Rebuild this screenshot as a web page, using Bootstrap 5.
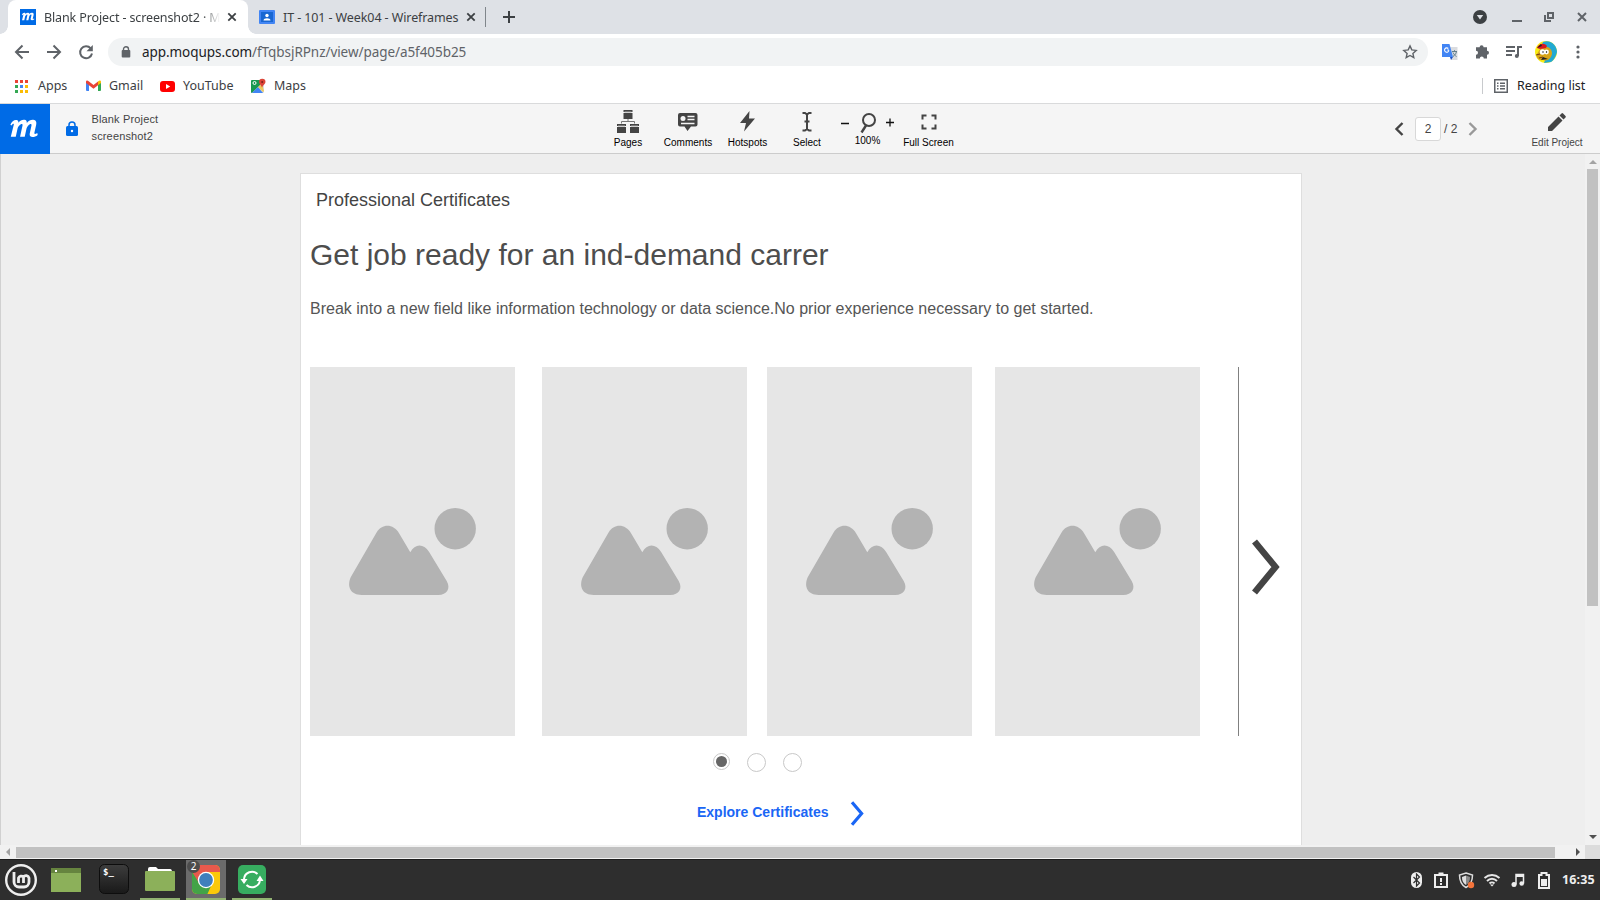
<!DOCTYPE html>
<html lang="en">
<head>
<meta charset="utf-8">
<title>Blank Project - screenshot2 · Moqups</title>
<link href="https://cdn.jsdelivr.net/npm/bootstrap@5.3.0/dist/css/bootstrap.min.css" rel="stylesheet">
<style>
html,body{height:900px;overflow:hidden}
body{width:1600px;font-family:"Liberation Sans",Arial,sans-serif;color:#444}
svg{display:block;overflow:visible;flex:none}
.bar{display:grid;align-items:center;white-space:nowrap}
.ui{font-family:"Noto Sans","Open Sans",sans-serif;font-size:12.5px;color:#3c4043;line-height:18px}
.tabstrip{height:34px;background:#dee1e6;grid-template-columns:8px 240px 11px 24px 181px 14px 9px 14px 972px 39px 32px 33px 23px}
.tab-active{height:34px;background:#fff;border-radius:8px 8px 0 0;padding-left:12px;position:relative}
.tab-active::before,.tab-active::after{content:"";position:absolute;bottom:0;width:8px;height:8px}
.tab-active::before{left:-8px;background:radial-gradient(circle at 0 0,#dee1e6 7.5px,#fff 8px)}
.tab-active::after{right:-8px;background:radial-gradient(circle at 100% 0,#dee1e6 7.5px,#fff 8px)}
.tab-title{width:179px;margin:2px 0 0 8px;overflow:hidden;-webkit-mask-image:linear-gradient(90deg,#000 158px,transparent 176px);letter-spacing:-.12px}
.tab-second{letter-spacing:-.1px;padding-top:2px}
.toolbar{height:35px;grid-template-columns:14px 32px 32px 30px 1320px 14px 30px 34px 28px 39px 27px}
.omni{height:28px;border-radius:14px;background:#f1f3f4;padding:0 11px 0 13px}
.url{font-size:13.5px;color:#5f6368;margin-left:11px;letter-spacing:-.06px}
.url b{font-weight:400;color:#202124}
.bookmarks{height:35px;grid-template-columns:15px 23px 48px 23px 51px 23px 68px 23px 1208px 12px 23px 80px;border-bottom:1px solid #d9dadb}
.apphead{height:50px;background:#f5f5f5;border-bottom:1px solid #ccc;display:grid;grid-template-columns:50px 548px 60px 60px 59px 60px 61px 61px 435px 21px 25px 24px 67px 69px}
.m-logo{background:#006be6;height:50px;width:50px}
.tool{font-size:10px;line-height:12px;color:#000;height:49px;padding-top:5px;text-align:center;white-space:nowrap}
.tool svg{margin:0 auto 4px}
.doc{font-size:11px;line-height:17px;color:#444;letter-spacing:.15px}
.pagebox{width:26px;height:24px;border:1px solid #d8d8d8;border-radius:3px;background:#fff;font-size:12px;line-height:23px;text-align:center}
.work{height:705px;background:#eee;display:grid;grid-template-columns:1585px 15px;grid-template-rows:691px 14px}
.canvas-area{overflow:hidden;border-left:1px solid #d0d0d0;padding:19px 0 0 299px}
.sheet{width:1002px;height:720px;background:#fff;border:1px solid #dedede;padding:16px 0 0 9px}
.t1{font-size:18px;line-height:20px;color:#444;margin:0 0 0 6px}
.t2{font-size:30px;line-height:36px;color:#4d4d4d;margin:27px 0 0}
.t3{font-size:16px;line-height:20px;color:#555;margin:26px 0 0}
.gallery{display:grid;grid-template-columns:232px 225px 228px 243px 15px 30px;margin-top:48px;height:369px;align-items:center}
.ph{width:205px;height:369px;background:#e6e6e6}
.divide{width:1px;height:369px;background:#808080}
.dots{margin:16px 0 0 403px}
.explore{margin:26px 0 0 387px;font-size:14px;font-weight:700;color:#1a66f5;line-height:24px}
.vs,.hs{background:#f1f1f1}
.taskbar{height:41px;background:#2e2e2e;border-top:1px solid #1d1d1d;grid-template-columns:5px 46px 43px 46px 46px 46px 1179px 23px 24px 26px 27px 27px 24px 38px}
.win{width:40px;height:40px;border-bottom:2px solid #92b372;padding:5px 0 0 5px}
.win.on{background:#6b6b6b;position:relative}
.cnt{position:absolute;left:1px;top:0;width:13px;height:13px;border-radius:7px;background:#4c4c4c;color:#fff;font:10px/13px "Noto Sans",sans-serif;text-align:center}
.clock{font:700 12.5px/18px "Noto Sans",sans-serif;color:#eee;letter-spacing:.15px}
</style>
</head>
<body>
<svg width="0" height="0" class="position-absolute"><defs>
<path id="em" d="M1 6.2C2 3.4 4 2.4 5.7 2.8c1 .3 1.200 1.100 1 2C8 3.300 9.600 2.500 11.200 2.700c1.300.1 1.800 1 1.700 2.200C14.300 3.300 16 2.500 17.600 2.700c2 .2 2.500 1.700 2.100 3.500l-1.300 5.600c-.2 1 .5 1.100 2.100.1l.3 1.300c-2.300 2-6.300 2.200-5.800-.8l1.300-5.800c.2-1-.4-1.300-1.200-.9-1 .5-2 1.600-2.400 3l-1.300 5.800H8l1.800-7.800c.2-1-.4-1.300-1.200-.9-1 .5-2 1.600-2.400 3l-1.300 5.700H1.300L3.500 6c.2-1-.9-.8-1.700.7z"/>
<symbol id="pic" viewBox="0 0 205 369"><g fill="#b3b3b3"><path d="M40.700 210.300 66.700 165.300C72 156.500 83.500 156.500 89.200 166.500L100.300 185.300C105 176.500 113.500 176.500 119 184.700L136.700 214C141 221.500 137 228 128.300 228H51.700C41 228 36.500 220 40.700 210.300Z"/><circle cx="145.200" cy="161.700" r="20.700"/></g></symbol>
<symbol id="x" viewBox="0 0 10 10"><path d="M1.300 1.300l7.400 7.400M8.700 1.300L1.300 8.700" stroke="#3c4043" stroke-width="1.800"/></symbol>
</defs></svg>

<header class="bar tabstrip ui">
  <span></span>
  <div class="tab-active d-flex align-items-center">
    <svg width="16" height="16"><rect width="16" height="16" fill="#006be6"/><use href="#em" fill="#fff" transform="translate(1.200 2) scale(.63)"/></svg>
    <span class="tab-title">Blank Project - screenshot2 · M</span>
    <svg class="ms-1" width="10" height="10"><use href="#x"/></svg>
  </div>
  <span></span>
  <svg width="16" height="14"><rect width="16" height="14" rx="1" fill="#4285f4"/><rect x="2" y="2" width="12" height="10" fill="#1967d2"/><circle cx="8" cy="5.500" r="1.700" fill="#fff"/><path d="M4.500 10.500c0-3 7-3 7 0z" fill="#fff"/></svg>
  <span class="tab-second">IT - 101 - Week04 - Wireframes</span>
  <svg width="10" height="10" style="margin-left:2px"><use href="#x"/></svg>
  <svg width="8" height="20"><path d="M7.500 0v20" stroke="#80868b"/></svg>
  <span></span>
  <svg width="12" height="12"><path d="M6 0v12M0 6h12" stroke="#3c4043" stroke-width="2" transform="translate(2 0)"/></svg>
  <svg width="14" height="14"><circle cx="7" cy="7" r="7" fill="#3c4043"/><path d="M3.800 5h6.400L7 9.500z" fill="#dee1e6"/></svg>
  <svg width="10" height="10"><path d="M0 9h10" stroke="#5f6368" stroke-width="2"/></svg>
  <svg width="10" height="10"><path d="M4 1h5v5H4zM1 3v6h6" fill="none" stroke="#5f6368" stroke-width="2"/></svg>
  <svg width="10" height="10"><path d="M1 1l8 8M9 1L1 9" stroke="#5f6368" stroke-width="2"/></svg>
</header>

<div class="bar toolbar ui">
  <span></span>
  <svg width="16" height="16" fill="none" stroke="#5f6368" stroke-width="2"><path d="M15 8H2M8.500 1.500L2 8l6.500 6.500"/></svg>
  <svg width="16" height="16" fill="none" stroke="#5f6368" stroke-width="2"><path d="M1 8h13M7.500 1.500L14 8l-6.500 6.500"/></svg>
  <svg width="16" height="16"><path d="M12.700 4.300A6 6 0 1 0 14 9.500" fill="none" stroke="#5f6368" stroke-width="2"/><path d="M14.800 1v6.300H8.500z" fill="#5f6368"/></svg>
  <div class="omni d-flex align-items-center">
    <svg width="10" height="12"><path d="M2.500 5V3.200a2.500 2.500 0 0 1 5 0V5" fill="none" stroke="#5f6368" stroke-width="1.400"/><rect x=".7" y="4" width="8.600" height="7.500" rx="1" fill="#5f6368"/></svg>
    <span class="url"><b>app.moqups.com</b>/fTqbsjRPnz/view/page/a5f405b25</span>
    <svg class="ms-auto" width="14" height="14"><path d="M7 .9l1.800 4 4.400.5-3.300 3 .9 4.300L7 10.500l-3.800 2.200.9-4.300-3.300-3 4.400-.5z" fill="none" stroke="#5f6368" stroke-width="1.400"/></svg>
  </div>
  <span></span>
  <svg width="16" height="16"><path d="M7 3h8.500v13H9z" fill="#dadce0"/><path d="M0 0h7.500L11 13H0z" fill="#4285f4"/><path d="M8 13h3l-2 3z" fill="#1a4fc4"/><path d="M7 6H5.300M6.900 6.500a2.200 2.200 0 1 1-.6-2" fill="none" stroke="#fff" stroke-width="1.100"/><path d="M10 7.500h5M12.500 6.200v1.300M14.500 7.500c-.5 2.500-2 4-3.500 5M11 8.500c1 2 2 3 3.500 4" fill="none" stroke="#607d8b"/></svg>
  <svg width="15" height="15" style="margin-left:3px"><path d="M1 3.200h3.600a2 2 0 1 1 4 0H12v3.600a2 2 0 1 1 0 4V14.500H8.800a2 2 0 1 0-4 0H1v-3.700a2 2 0 1 0 0-4z" fill="#5f6368"/></svg>
  <svg width="16" height="14" fill="none" stroke="#5f6368" stroke-width="2"><path d="M0 2h9M0 6h9M0 10h6M12 11V2h4"/><circle cx="10.800" cy="11" r="2" fill="#5f6368" stroke="none"/></svg>
  <svg width="22" height="22" style="margin-left:1px"><circle cx="11" cy="11" r="11" fill="#f9ee14"/><path d="M8 1c8-3 14 4 14 10-1 5-4 9-6 10l-7 1 3-8-6-8z" fill="#21a9d2"/><path d="M5 8c6-5 12-1 12 4s-5 9-9 7c-5 1-7-3-6-6z" fill="#d8a419"/><path d="M2 7c1-4 7-6 10-2l-1 2-6 1z" fill="#d91920"/><path d="M2 7l4-4 1 2zM13 18l-7 1 2-3z" fill="#222"/><circle cx="7.500" cy="11" r="2.700" fill="#fff"/><circle cx="11.500" cy="11" r="2.400" fill="#fff"/><circle cx="8" cy="11" r=".7"/><circle cx="11.500" cy="11" r=".7"/><path d="M1 14l4-1M4 17l4-1" stroke="#733b13"/></svg>
  <svg width="4" height="14" style="margin-left:3px" fill="#5f6368"><circle cx="2" cy="2" r="1.600"/><circle cx="2" cy="7" r="1.600"/><circle cx="2" cy="12" r="1.600"/></svg>
</div>

<div class="bar bookmarks ui">
  <span></span>
  <svg width="13" height="13"><path d="M0 0h3v3H0zM5 0h3v3H5zM10 0h3v3h-3z" fill="#ea4335"/><path d="M0 5h3v3H0zM0 10h3v3H0z" fill="#34a853"/><path d="M5 5h3v3H5z" fill="#4285f4"/><path d="M10 5h3v3h-3zM5 10h3v3H5zM10 10h3v3h-3z" fill="#fbbc04"/></svg>
  <span>Apps</span>
  <svg width="15" height="12"><path d="M0 2l3 2v7H1a1 1 0 0 1-1-1z" fill="#4285f4"/><path d="M12 4l3-2v8a1 1 0 0 1-1 1h-2z" fill="#34a853"/><path d="M12 1.500C14-.2 15 .8 15 2v1l-3 2.300z" fill="#fbbc04"/><path d="M3 1.500l4.500 3.400L12 1.500v3.800L7.500 8.700 0 3V2C0 .8 1-.2 3 1.500z" fill="#ea4335"/></svg>
  <span>Gmail</span>
  <svg width="15" height="11"><rect width="15" height="11" rx="3" fill="#f00"/><path d="M6 3l4.200 2.500L6 8z" fill="#fff"/></svg>
  <span>YouTube</span>
  <svg width="15" height="15"><rect y="1" width="13" height="13" rx="1.500" fill="#dadce0"/><path d="M0 2a1 1 0 0 1 1-1h8L9 6 1 14a1 1 0 0 1-1-1z" fill="#1a9850"/><path d="M1 14l6-6 5 6z" fill="#4285f4"/><path d="M7 8l4-3 2 7-1 1z" fill="#fbbc04" opacity=".6"/><path d="M11 8.500C10 6 8 5 8 3a3 3 0 0 1 6.500 0c0 2-2.500 3-3.500 5.500z" fill="#db4437"/><circle cx="11.200" cy="3" r="1" fill="#7b211a"/><circle cx="3.500" cy="4" r="1.500" fill="none" stroke="#fff"/></svg>
  <span>Maps</span>
  <svg width="2" height="16"><path d="M.5 0v16" stroke="#c8cacd"/></svg>
  <svg width="14" height="14" fill="none" stroke="#5f6368"><rect x=".75" y=".75" width="12.500" height="12.500" stroke-width="1.500"/><path d="M3 4.200h1.500M6 4.200h5M3 7h1.500M6 7h5M3 9.800h1.500M6 9.800h5" stroke-width="1.400"/></svg>
  <span style="color:#202124">Reading list</span>
</div>

<nav class="apphead align-items-center">
  <div class="m-logo"><svg width="50" height="50"><use href="#em" fill="#fff" transform="translate(9 12) scale(1.380 1.430)"/></svg></div>
  <div class="d-flex align-items-center">
    <svg width="12" height="15" style="margin:-2px 0 0 16px"><path d="M3 6V4a3 3 0 0 1 6 0v2" fill="none" stroke="#006be6" stroke-width="1.500"/><rect y="5" width="12" height="10" rx="1.500" fill="#006be6"/><circle cx="6" cy="10" r="1.200" fill="#fff"/></svg>
    <div class="doc" style="margin:-2px 0 0 13.500px">Blank Project<br>screenshot2</div>
  </div>
  <div class="tool"><svg width="22" height="23" fill="#444"><path d="M6.500 0h9v2h-9zM6.500 3h9v6h-9zM0 14h9v2H0zM0 17h9v6H0zM13 14h9v2h-9zM13 17h9v6h-9z"/><path d="M7.500 2h7M1 16h7M14 16h7" stroke="#aaa"/><path d="M11 9v2.500M4.500 13.500v-2h13v2" fill="none" stroke="#777"/></svg>Pages</div>
  <div class="tool"><svg width="22" height="23" fill="#444"><path d="M3 3h15.500a2 2 0 0 1 2 2v9.500a2 2 0 0 1-2 2H14L10.500 21 7.500 16.500H3a2 2 0 0 1-2-2V5a2 2 0 0 1 2-2z"/><circle cx="6" cy="8.500" r="2.500" fill="#f5f5f5"/><path d="M10.500 6.500h7M10.500 9.500h7M4 13.500h13.500" stroke="#f5f5f5" stroke-width="1.400"/></svg>Comments</div>
  <div class="tool"><svg width="22" height="23"><path d="M12.500 1L3 13h6L7 21.500 18 8.500h-6z" fill="#444"/></svg>Hotspots</div>
  <div class="tool"><svg width="22" height="23"><path d="M6.500 3H9l2 1.500L13 3h2.500M6.500 20.500H9l2-1.500 2 1.500h2.500M11 4.500V19M8.500 11.500h5" fill="none" stroke="#444" stroke-width="2"/></svg>Select</div>
  <div class="tool"><svg width="52" height="21"><path d="M-1 13.500h8M44 12.500h8M48 8.500v8" stroke="#111" stroke-width="1.300"/><circle cx="27" cy="10" r="6" fill="none" stroke="#444" stroke-width="2"/><path d="M24 15.500l-4.500 7" stroke="#444" stroke-width="2.400"/></svg>100%</div>
  <div class="tool"><svg width="22" height="23"><path d="M4.500 9.500v-4h4M13.500 5.500h4v4M4.500 14.500v4h4M13.500 18.500h4v-4" fill="none" stroke="#444" stroke-width="2"/></svg>Full Screen</div>
  <span></span>
  <svg width="10" height="14"><path d="M8.500 1L2.500 7l6 6" fill="none" stroke="#444" stroke-width="2.400"/></svg>
  <div class="pagebox">2</div>
  <div style="font-size:12px;padding-left:4px;white-space:nowrap">/ 2</div>
  <svg width="10" height="14" style="margin-left:4px"><path d="M1.500 1l6 6-6 6" fill="none" stroke="#999" stroke-width="2.400"/></svg>
  <div class="tool" style="color:#444;width:52px"><svg width="18" height="23"><path d="M0 21v-4L10.500 6.500l4 4L4 21zM11.500 5.500l2-2q.8-.8 1.600 0l2.400 2.400q.8.800 0 1.600l-2 2z" fill="#444"/></svg>Edit Project</div>
</nav>

<main class="work">
  <div class="canvas-area">
    <section class="sheet">
      <h2 class="t1 fw-normal">Professional Certificates</h2>
      <h1 class="t2 fw-normal">Get job ready for an ind-demand carrer</h1>
      <p class="t3">Break into a new field like information technology or data science.No prior experience necessary to get started.</p>
      <div class="gallery">
        <svg class="ph"><use href="#pic"/></svg>
        <svg class="ph"><use href="#pic"/></svg>
        <svg class="ph"><use href="#pic"/></svg>
        <svg class="ph"><use href="#pic"/></svg>
        <div class="divide"></div>
        <svg width="27" height="56" style="margin-top:30px"><path d="M1.500 2.500L22.500 28 1.500 53.500" fill="none" stroke="#444" stroke-width="6.400"/></svg>
      </div>
      <div class="dots d-flex">
        <svg width="106" height="20" fill="none" stroke="#c8c8c8"><circle cx="8.500" cy="9.500" r="8"/><circle cx="8.500" cy="9.500" r="5.500" fill="#666" stroke="none"/><circle cx="43.500" cy="10.500" r="9"/><circle cx="79.500" cy="10.500" r="9"/></svg>
      </div>
      <div class="explore d-flex align-items-center"><span>Explore Certificates</span><svg width="13" height="25" style="margin:3px 0 0 22px"><path d="M1 1.200l9.600 11.300L1 23.800" fill="none" stroke="#1a66f5" stroke-width="3.200"/></svg></div>
    </section>
  </div>
  <svg class="vs" width="15" height="691"><path d="M4 10l4-4 4 4z" fill="#a3a3a3"/><rect x="2" y="15" width="11" height="437" fill="#c1c1c1"/><path d="M4 681h8l-4 4z" fill="#505050"/></svg>
  <svg class="hs" width="1585" height="14"><path d="M10 3v8L6 7z" fill="#a3a3a3"/><rect x="16" y="2" width="1539" height="11" fill="#c1c1c1"/><path d="M1576 3v8l4-4z" fill="#505050"/></svg>
  <div style="background:#dcdcdc"></div>
</main>

<footer class="bar taskbar">
  <span></span>
  <svg width="32" height="32" fill="none" stroke="#eee"><circle cx="16" cy="16" r="14.800" stroke-width="2.400"/><path d="M9 8v10a5 5 0 0 0 5 5h5a5 5 0 0 0 5-5v-4a3 3 0 0 0-5.500-1A3 3 0 0 0 13.500 14v5M18.500 13v6" stroke-width="2.800"/></svg>
  <svg width="30" height="24"><rect width="30" height="24" fill="#8cb05a"/><rect width="30" height="5" fill="#66843f"/><rect x="4" y="2" width="2" height="2" fill="#fff"/></svg>
  <svg width="30" height="30" style="margin:-2px 0 0 5px"><defs><linearGradient id="tg" x2="0" y2="1"><stop stop-color="#3d3d3d"/><stop offset="1" stop-color="#191919"/></linearGradient></defs><rect x=".5" y=".5" width="29" height="29" rx="5" fill="url(#tg)" stroke="#0d0d0d"/><text x="4" y="11" font-family="DejaVu Sans Mono" font-size="9" font-weight="700" fill="#fff">$_</text></svg>
  <div class="win"><svg width="30" height="26" style="margin-top:1px"><path d="M3 3q0-2 2-2h6l2 2h12q2 0 2 3H3z" fill="#fff"/><rect y="5" width="30" height="20" rx="1" fill="#8cb05a"/></svg></div>
  <div class="win on"><svg width="30" height="30"><clipPath id="cc"><rect x="1" width="28" height="29" rx="5"/></clipPath><g clip-path="url(#cc)"><rect width="30" height="30" fill="#fbc90a"/><path d="M0 0h30v7H15L7 18 0 8z" fill="#e8594c"/><path d="M0 5l8 13 12 3-4 9H0z" fill="#43a347"/></g><circle cx="15" cy="15" r="8.200" fill="#fff"/><circle cx="15" cy="15" r="6.900" fill="#3f7fbc"/></svg><span class="cnt">2</span></div>
  <div class="win"><svg width="30" height="30"><rect x="1" width="28" height="29" rx="5" fill="#37ad60"/><path d="M7 14a8 8 0 0 1 13.500-5M23 15a8 8 0 0 1-13.500 5" fill="none" stroke="#fff" stroke-width="2"/><path d="M19.500 16h7L23 10.500zM3.500 14h7L7 19z" fill="#fff"/></svg></div>
  <svg width="12" height="17"><rect width="11" height="16" rx="5.500" fill="#eee"/><path d="M2.500 5l6 6-3 3V2l3 3-6 6" fill="none" stroke="#2e2e2e" stroke-width="1.200"/></svg>
  <svg width="14" height="17" fill="none" stroke="#eee" stroke-width="2"><path d="M1 3h12v12H1z"/><path d="M4.500 1.500h5"/><path d="M7 6v4M7 11v2"/></svg>
  <svg width="16" height="17"><path d="M8 1l6.500 2c0 6-1.500 10-6.500 12.500C3 13 1.500 9 1.500 3z" fill="#2e2e2e" stroke="#ddd" stroke-width="1.500"/><path d="M8 3.500L4 5c0 4 1 6 4 8z" fill="#ddd"/><path d="M8 3.500L12 5c0 4-1 6-4 8z" fill="#888"/><circle cx="13" cy="13" r="3.200" fill="#f4743b"/></svg>
  <svg width="16" height="13" fill="none" stroke="#e6e6e6" stroke-width="1.900"><path d="M.5 4c4.500-4 10.500-4 15 0M3 7c3-3 7-3 10 0M5.500 9.500c1.500-1.500 3.500-1.500 5 0"/><path d="M6 10.500h4l-2 2z" fill="#eee" stroke="none"/></svg>
  <svg width="14" height="14"><path d="M5 11.500V1.500h7.500v9" fill="none" stroke="#eee" stroke-width="1.500"/><path d="M5 1h8v3H5z" fill="#eee"/><circle cx="3" cy="11.500" r="2.500" fill="#eee"/><circle cx="10.700" cy="10.500" r="2.300" fill="#eee"/></svg>
  <svg width="12" height="17"><path d="M1 3h2.500V1h5v2H11v13H1z" fill="none" stroke="#eee" stroke-width="2"/><path d="M3 7h6v7H3z" fill="#eee"/></svg>
  <span class="clock">16:35</span>
</footer>
<script src="https://cdn.jsdelivr.net/npm/bootstrap@5.3.0/dist/js/bootstrap.bundle.min.js"></script>
</body>
</html>
